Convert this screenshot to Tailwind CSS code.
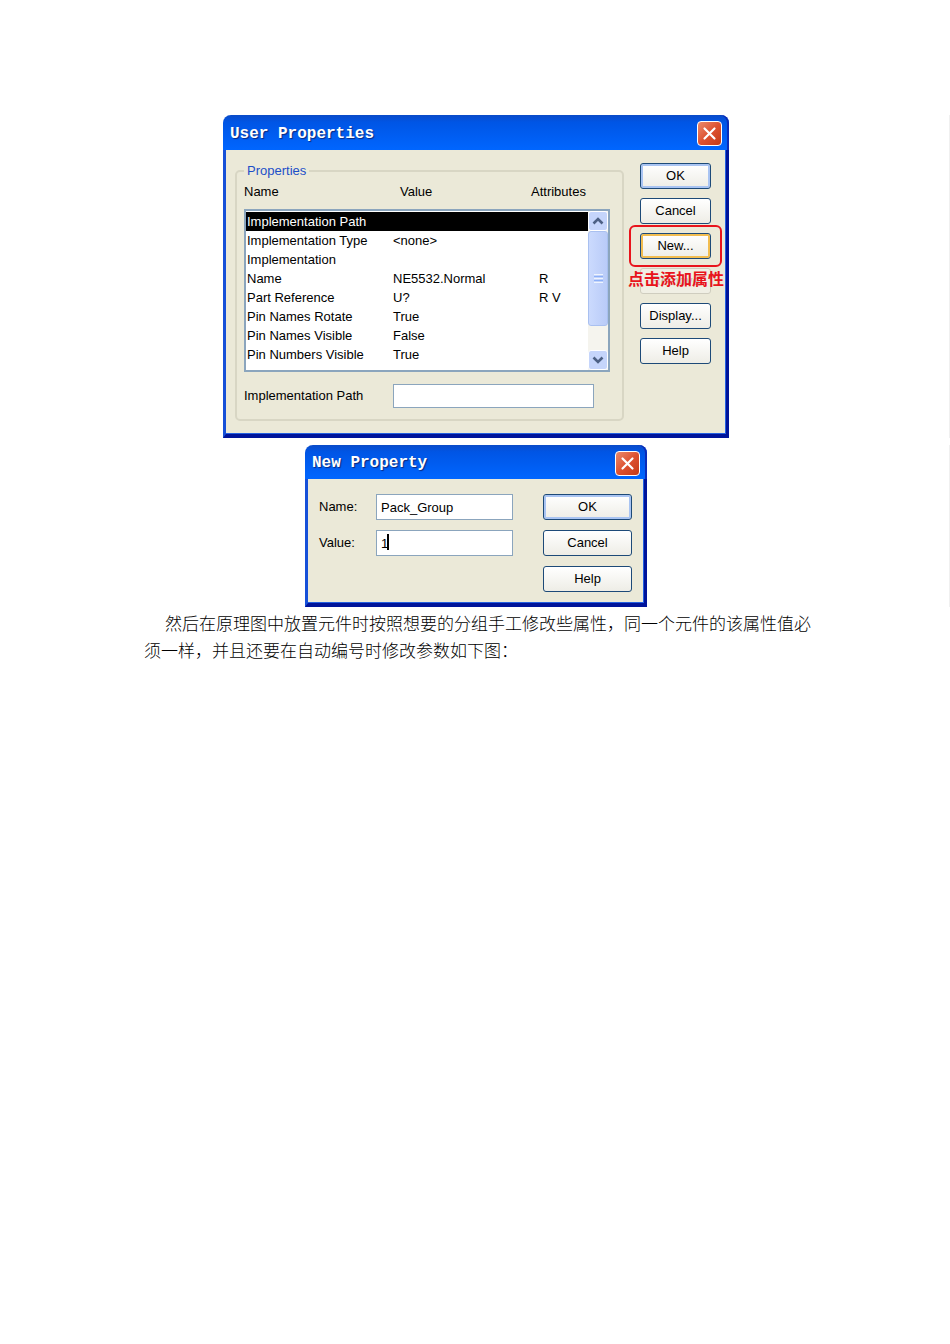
<!DOCTYPE html>
<html lang="zh-CN">
<head>
    <meta charset="UTF-8">
    <meta name="viewport" content="width=device-width, initial-scale=1.0">
    <title>User Properties</title>
    <script src="https://cdn.jsdelivr.net/npm/@tailwindcss/browser@4"></script>
</head>
<body class="min-h-screen bg-white pt-[115px] font-['Liberation_Sans',sans-serif] text-[13px] text-black">
    <main>

        <!-- User Properties dialog -->
        <div class="border-r border-[#f0f0f0] pl-[3px]">
            <section class="mx-auto w-full max-w-[506px]">
                <header class="flex h-[35px] items-center justify-between rounded-t-lg bg-linear-to-b from-[#0a4bc8] via-[#0055e5] via-20% to-[#0066ff] px-[7px] pt-[2px] shadow-[inset_-2px_0_0_#0a2cb8]">
                    <h1 class="font-['Liberation_Mono',monospace] text-[16px] leading-5 font-bold text-white [text-shadow:1px_1px_1px_#0a2a80]">User Properties</h1>
                    <button type="button" aria-label="Close" class="flex size-[25px] items-center justify-center rounded-[4px] border border-white bg-linear-to-br from-[#ea8a6c] via-[#dd5130] to-[#c53a14]">
                        <svg class="size-[15px]" viewBox="0 0 15 15" fill="none" stroke="#fff" stroke-width="2.2" stroke-linecap="round"><path d="M2.5 2.5l10 10M12.5 2.5l-10 10"/></svg>
                    </button>
                </header>
                <div class="border-x-3 border-b-4 border-[#00149a] border-l-[#1650d8]">
                    <div class="flex gap-4 border-r border-b border-[#2460e0] bg-[#ebe9d8] pt-[13px] pr-[14px] pb-[12px] pl-[9px]">
                        <fieldset class="min-w-0 flex-1 rounded-[5px] border-2 border-[#d8d6c4] px-[7px] pb-[11px]">
                            <legend class="px-[3px] text-[13px] leading-[15px] text-[#1c4fc8]">Properties</legend>
                            <div class="flex h-[31px] pt-[4px] leading-5">
                                <span class="w-[156px]">Name</span>
                                <span class="flex-1">Value</span>
                                <span class="w-[84px]">Attributes</span>
                            </div>
                            <div class="mr-[5px] flex h-[163px] border-2 border-[#8ba5bd] bg-white">
                                <div class="flex-1 pt-px">
                                    <table class="w-full table-fixed border-collapse leading-[19px]">
                                        <colgroup>
                                            <col class="w-[147px]">
                                            <col>
                                            <col class="w-[49px]">
                                        </colgroup>
                                        <tbody>
                                            <tr class="bg-black text-white"><td class="pl-px">Implementation Path</td><td></td><td></td></tr>
                                            <tr><td class="pl-px">Implementation Type</td><td>&lt;none&gt;</td><td></td></tr>
                                            <tr><td class="pl-px">Implementation</td><td></td><td></td></tr>
                                            <tr><td class="pl-px">Name</td><td>NE5532.Normal</td><td>R</td></tr>
                                            <tr><td class="pl-px">Part Reference</td><td>U?</td><td>R V</td></tr>
                                            <tr><td class="pl-px">Pin Names Rotate</td><td>True</td><td></td></tr>
                                            <tr><td class="pl-px">Pin Names Visible</td><td>False</td><td></td></tr>
                                            <tr><td class="pl-px">Pin Numbers Visible</td><td>True</td><td></td></tr>
                                        </tbody>
                                    </table>
                                </div>
                                <!-- scroll bar -->
                                <div class="flex w-[20px] flex-col bg-[#f5f4ee]">
                                    <button type="button" aria-label="Scroll up" class="flex h-[20px] items-center justify-center rounded-[3px] border border-white bg-[#c5d5fb]">
                                        <svg class="h-[8px] w-[12px]" viewBox="0 0 12 8" fill="none" stroke="#4d6185" stroke-width="2.6"><path d="M1.5 6.5L6 2l4.5 4.5"/></svg>
                                    </button>
                                    <div class="flex h-[95px] flex-col items-center justify-center gap-px rounded-[3px] border border-[#a9c0f0] bg-linear-to-r from-[#cbdafd] to-[#b9cbf8]">
                                        <span class="h-px w-[9px] bg-[#eef4fe]"></span>
                                        <span class="h-px w-[9px] bg-[#8cb0f8]"></span>
                                        <span class="h-px w-[9px] bg-[#eef4fe]"></span>
                                        <span class="h-px w-[9px] bg-[#8cb0f8]"></span>
                                        <span class="h-px w-[9px] bg-[#eef4fe]"></span>
                                    </div>
                                    <button type="button" aria-label="Scroll down" class="mt-auto flex h-[20px] items-center justify-center rounded-[3px] border border-white bg-[#c5d5fb]">
                                        <svg class="h-[8px] w-[12px]" viewBox="0 0 12 8" fill="none" stroke="#4d6185" stroke-width="2.6"><path d="M1.5 1.5L6 6l4.5-4.5"/></svg>
                                    </button>
                                </div>
                            </div>
                            <div class="mt-[12px] mr-[21px] flex items-center">
                                <label for="implementation-path" class="w-[149px]">Implementation Path</label>
                                <input type="text" id="implementation-path" class="h-[24px] min-w-0 flex-1 border border-[#8ba5bd] bg-white px-1 outline-none">
                            </div>
                        </fieldset>
                        <div class="flex w-[71px] flex-col gap-[9px]">
                            <button type="button" class="h-[26px] rounded-[3px] border border-[#1d4a78] bg-linear-to-b from-white to-[#eeede6] shadow-[inset_0_0_0_2px_#a9c4f2]">OK</button>
                            <button type="button" class="h-[26px] rounded-[3px] border border-[#1d4a78] bg-linear-to-b from-white to-[#eeede6]">Cancel</button>
                            <div class="relative h-[26px]">
                                <button type="button" class="h-[26px] w-full rounded-[3px] border border-[#1d4a78] bg-linear-to-b from-white to-[#eeede6] shadow-[inset_0_0_0_2px_#f2bd50]">New...</button>
                                <div class="pointer-events-none absolute -inset-x-[11px] -inset-y-[8px] rounded-[6px] border-2 border-[#e8141c]"></div>
                            </div>
                            <div class="relative h-[26px]">
                                <button type="button" disabled class="h-[26px] w-full rounded-[3px] border border-[#cfcdbf] bg-[#f0efe4] text-[#c4c2b4]">Remove</button>
                                <p class="absolute inset-x-[-12px] top-0 text-center font-['Noto_Sans_CJK_SC',sans-serif] text-[16px] leading-5 font-bold whitespace-nowrap text-[#e8141c]">点击添加属性</p>
                            </div>
                            <button type="button" class="h-[26px] rounded-[3px] border border-[#1d4a78] bg-linear-to-b from-white to-[#eeede6]">Display...</button>
                            <button type="button" class="h-[26px] rounded-[3px] border border-[#1d4a78] bg-linear-to-b from-white to-[#eeede6]">Help</button>
                        </div>
                    </div>
                </div>
            </section>
        </div>

        <!-- New Property dialog -->
        <div class="mt-[7px] border-r border-[#f0f0f0] pl-[3px]">
            <section class="mx-auto w-full max-w-[342px]">
                <header class="flex h-[34px] items-center justify-between rounded-t-lg bg-linear-to-b from-[#0a4bc8] via-[#0055e5] via-20% to-[#0066ff] px-[7px] pt-[2px] shadow-[inset_-2px_0_0_#0a2cb8]">
                    <h2 class="font-['Liberation_Mono',monospace] text-[16px] leading-5 font-bold text-white [text-shadow:1px_1px_1px_#0a2a80]">New Property</h2>
                    <button type="button" aria-label="Close" class="flex size-[25px] items-center justify-center rounded-[4px] border border-white bg-linear-to-br from-[#ea8a6c] via-[#dd5130] to-[#c53a14]">
                        <svg class="size-[15px]" viewBox="0 0 15 15" fill="none" stroke="#fff" stroke-width="2.2" stroke-linecap="round"><path d="M2.5 2.5l10 10M12.5 2.5l-10 10"/></svg>
                    </button>
                </header>
                <div class="border-x-3 border-b-4 border-[#00149a] border-l-[#1650d8]">
                    <div class="flex justify-between border-r border-b border-[#2460e0] bg-[#ebe9d8] pt-[15px] pr-[11px] pb-[10px] pl-[11px]">
                        <div class="flex flex-col gap-[10px]">
                            <div class="flex items-center">
                                <label for="prop-name" class="w-[57px]">Name:</label>
                                <input type="text" id="prop-name" value="Pack_Group" class="h-[26px] w-[137px] border border-[#8ba5bd] bg-white px-1 outline-none">
                            </div>
                            <div class="flex items-center">
                                <label for="prop-value" class="w-[57px]">Value:</label>
                                <div class="relative">
                                    <input type="text" id="prop-value" value="1" class="h-[26px] w-[137px] border border-[#8ba5bd] bg-white px-1 outline-none">
                                    <!-- text cursor -->
                                    <span class="absolute top-[4px] left-[11px] h-[16px] w-[2px] bg-black"></span>
                                </div>
                            </div>
                        </div>
                        <div class="flex w-[89px] flex-col gap-[10px]">
                            <button type="button" class="h-[26px] rounded-[3px] border border-[#1d4a78] bg-linear-to-b from-white to-[#eeede6] shadow-[inset_0_0_0_2px_#a9c4f2]">OK</button>
                            <button type="button" class="h-[26px] rounded-[3px] border border-[#1d4a78] bg-linear-to-b from-white to-[#eeede6]">Cancel</button>
                            <button type="button" class="h-[26px] rounded-[3px] border border-[#1d4a78] bg-linear-to-b from-white to-[#eeede6]">Help</button>
                        </div>
                    </div>
                </div>
            </section>
        </div>

        <p class="mx-auto mt-[4px] max-w-[680px] pl-[9px] indent-[21px] font-['Liberation_Serif','Noto_Sans_CJK_SC',serif] text-[17px] leading-[27px] font-light">然后在原理图中放置元件时按照想要的分组手工修改些属性，同一个元件的该属性值必<br>须一样，并且还要在自动编号时修改参数如下图：</p>
    </main>
</body>
</html>
